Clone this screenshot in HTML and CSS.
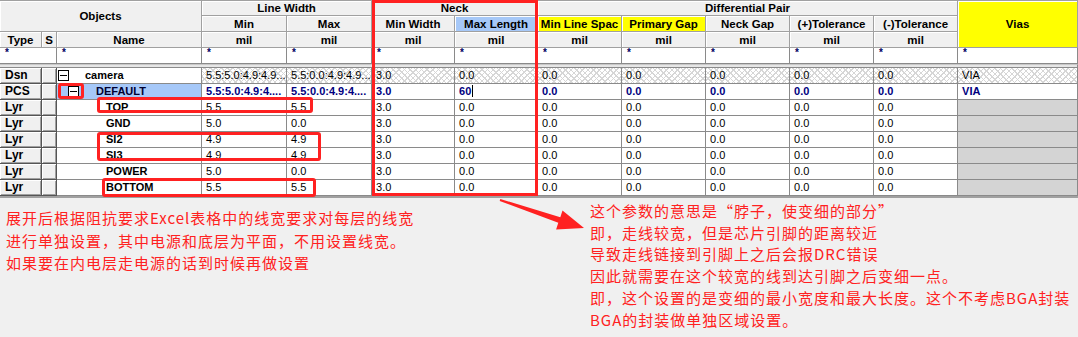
FILE: index.html
```html
<!DOCTYPE html>
<html lang="zh-CN">
<head>
    <meta charset="UTF-8">
    <title>Constraint Manager - Neck</title>
    <link rel="stylesheet" href="styles.css">
</head>
<body>

    <div class="sheet">
        <table class="grid">
            <colgroup>
                <col class="c-type"><col class="c-s"><col class="c-name">
                <col class="c-lw"><col class="c-lw">
                <col class="c-neck"><col class="c-neck">
                <col class="c-dp"><col class="c-dp"><col class="c-dp"><col class="c-dp"><col class="c-dp">
                <col class="c-vias">
            </colgroup>
            <thead>
                <tr class="h1">
                    <th colspan="3" rowspan="2">Objects</th>
                    <th colspan="2">Line Width</th>
                    <th colspan="2">Neck</th>
                    <th colspan="5">Differential Pair</th>
                    <th rowspan="3" class="hl">Vias</th>
                </tr>
                <tr class="h2">
                    <th>Min</th>
                    <th>Max</th>
                    <th>Min Width</th>
                    <th class="sel">Max Length</th>
                    <th class="hl">Min Line Spac</th>
                    <th class="hl">Primary Gap</th>
                    <th>Neck Gap</th>
                    <th>(+)Tolerance</th>
                    <th>(-)Tolerance</th>
                </tr>
                <tr class="h3">
                    <th>Type</th>
                    <th>S</th>
                    <th>Name</th>
                    <th>mil</th><th>mil</th><th>mil</th><th>mil</th><th>mil</th>
                    <th>mil</th><th>mil</th><th>mil</th><th>mil</th>
                </tr>
            </thead>
            <tbody>
                <tr class="filter">
                    <td colspan="2">*</td>
                    <td>*</td><td>*</td><td>*</td><td>*</td><td>*</td>
                    <td>*</td><td>*</td><td>*</td><td>*</td><td>*</td><td>*</td>
                </tr>
                <tr class="gap"><td colspan="13"></td></tr>

                <tr class="dsn">
                    <td class="btn">Dsn</td><td class="btn"></td>
                    <td class="name"><div class="tree lvl-0"><span class="toggle"></span><span class="label">camera</span></div></td>
                    <td class="num">5.5:5.0:4.9:4.9...</td>
                    <td class="num">5.5:0.0:4.9:4.9...</td>
                    <td class="num">3.0</td><td class="num">0.0</td>
                    <td class="num">0.0</td><td class="num">0.0</td><td class="num">0.0</td><td class="num">0.0</td><td class="num">0.0</td>
                    <td class="num">VIA</td>
                </tr>
                <tr class="pcs">
                    <td class="btn">PCS</td><td class="btn"></td>
                    <td class="name"><div class="tree lvl-1"><span class="toggle"></span><span class="label">DEFAULT</span></div></td>
                    <td class="num">5.5:5.0:4.9:4....</td>
                    <td class="num">5.5:0.0:4.9:4....</td>
                    <td class="num">3.0</td><td class="num"><span class="caret">60</span></td>
                    <td class="num">0.0</td><td class="num">0.0</td><td class="num">0.0</td><td class="num">0.0</td><td class="num">0.0</td>
                    <td class="num">VIA</td>
                </tr>
                <tr class="lyr">
                    <td class="btn">Lyr</td><td class="btn"></td>
                    <td class="name"><div class="tree lvl-2"><span class="label">TOP</span></div></td>
                    <td class="num">5.5</td><td class="num">5.5</td>
                    <td class="num">3.0</td><td class="num">0.0</td>
                    <td class="num">0.0</td><td class="num">0.0</td><td class="num">0.0</td><td class="num">0.0</td><td class="num">0.0</td>
                    <td class="off"></td>
                </tr>
                <tr class="lyr">
                    <td class="btn">Lyr</td><td class="btn"></td>
                    <td class="name"><div class="tree lvl-2"><span class="label">GND</span></div></td>
                    <td class="num">5.0</td><td class="num">0.0</td>
                    <td class="num">3.0</td><td class="num">0.0</td>
                    <td class="num">0.0</td><td class="num">0.0</td><td class="num">0.0</td><td class="num">0.0</td><td class="num">0.0</td>
                    <td class="off"></td>
                </tr>
                <tr class="lyr">
                    <td class="btn">Lyr</td><td class="btn"></td>
                    <td class="name"><div class="tree lvl-2"><span class="label">SI2</span></div></td>
                    <td class="num">4.9</td><td class="num">4.9</td>
                    <td class="num">3.0</td><td class="num">0.0</td>
                    <td class="num">0.0</td><td class="num">0.0</td><td class="num">0.0</td><td class="num">0.0</td><td class="num">0.0</td>
                    <td class="off"></td>
                </tr>
                <tr class="lyr">
                    <td class="btn">Lyr</td><td class="btn"></td>
                    <td class="name"><div class="tree lvl-2"><span class="label">SI3</span></div></td>
                    <td class="num">4.9</td><td class="num">4.9</td>
                    <td class="num">3.0</td><td class="num">0.0</td>
                    <td class="num">0.0</td><td class="num">0.0</td><td class="num">0.0</td><td class="num">0.0</td><td class="num">0.0</td>
                    <td class="off"></td>
                </tr>
                <tr class="lyr">
                    <td class="btn">Lyr</td><td class="btn"></td>
                    <td class="name"><div class="tree lvl-2"><span class="label">POWER</span></div></td>
                    <td class="num">5.0</td><td class="num">0.0</td>
                    <td class="num">3.0</td><td class="num">0.0</td>
                    <td class="num">0.0</td><td class="num">0.0</td><td class="num">0.0</td><td class="num">0.0</td><td class="num">0.0</td>
                    <td class="off"></td>
                </tr>
                <tr class="lyr">
                    <td class="btn">Lyr</td><td class="btn"></td>
                    <td class="name"><div class="tree lvl-2"><span class="label">BOTTOM</span></div></td>
                    <td class="num">5.5</td><td class="num">5.5</td>
                    <td class="num">3.0</td><td class="num">0.0</td>
                    <td class="num">0.0</td><td class="num">0.0</td><td class="num">0.0</td><td class="num">0.0</td><td class="num">0.0</td>
                    <td class="off"></td>
                </tr>
            </tbody>
        </table>

        <!-- red annotation boxes drawn over the grid -->
        <div class="mark mark-pcs"></div>
        <div class="mark mark-top"></div>
        <div class="mark mark-si"></div>
        <div class="mark mark-bottom"></div>
        <div class="mark mark-neck"></div>
    </div>

    <div class="notes">
        <div class="note note-left">
            <p>展开后根据阻抗要求Excel表格中的线宽要求对每层的线宽</p>
            <p>进行单独设置，其中电源和底层为平面，不用设置线宽。</p>
            <p>如果要在内电层走电源的话到时候再做设置</p>
        </div>
        <div class="note note-right">
            <p>这个参数的意思是“脖子，使变细的部分”</p>
            <p>即，走线较宽，但是芯片引脚的距离较近</p>
            <p>导致走线链接到引脚上之后会报DRC错误</p>
            <p>因此就需要在这个较宽的线到达引脚之后变细一点。</p>
            <p>即，这个设置的是变细的最小宽度和最大长度。这个不考虑BGA封装</p>
            <p>BGA的封装做单独区域设置。</p>
        </div>
    </div>

    <svg class="arrow" width="1078" height="337" viewBox="0 0 1078 337">
        <polygon points="500.3,199 560.3,217.2 562.5,210.5 584,228 556.1,229.5 558.3,222.8 499.7,201" fill="#ff2121"/>
    </svg>

</body>
</html>
```

FILE: styles.css
```css
body {
    margin: 0;
    padding: 0;
    width: 1078px;
    height: 337px;
    overflow: hidden;
    position: relative;
    background-color: #f0f0f0;
    font-family: "Liberation Sans", Arial, sans-serif;
}

.sheet {
    position: relative;
    width: 1078px;
    border-bottom: 2px solid #a0a0a0;
}

.grid {
    width: 1078px;
    table-layout: fixed;
    border-collapse: separate;
    border-spacing: 0;
    font-size: 11px;
    color: #000;
}

.c-type { width: 42px; }
.c-s { width: 15px; }
.c-name { width: 145px; }
.c-lw { width: 85px; }
.c-neck { width: 83px; }
.c-dp { width: 84px; }
.c-vias { width: 120px; }

.grid th,
.grid td {
    box-sizing: border-box;
    padding: 0;
    white-space: nowrap;
    overflow: hidden;
}

/* header */
.grid th {
    background-color: #f0f0f0;
    border-right: 1px solid #a0a0a0;
    border-bottom: 1px solid #a0a0a0;
    box-shadow: inset 1px 1px 0 #fff;
    font-weight: bold;
    font-size: 11.5px;
    text-align: center;
    line-height: 14px;
}

.grid tr.h1,
.grid tr.h2,
.grid tr.h3 {
    height: 16px;
}

.grid tr.h1 th {
    border-top: 1px solid #a0a0a0;
}

.grid th.hl {
    background-color: #ffff00;
}

.grid th.sel {
    background-color: #a6c8f8;
}

/* filter row */
.grid tr.filter {
    height: 15px;
}

.grid tr.filter td {
    background-color: #fff;
    border-right: 1px solid #8a8a8a;
    vertical-align: top;
    padding-left: 5px;
    font-size: 10px;
    font-weight: bold;
    line-height: 10px;
    color: #000060;
}

.grid tr.gap td {
    height: 4px;
    background-color: #e6e6e6;
    border-top: 1px solid #c8c8c8;
}

/* data rows */
.grid tbody tr.dsn,
.grid tbody tr.pcs,
.grid tbody tr.lyr {
    height: 16px;
}

.grid td {
    height: 16px;
    line-height: 15px;
    background-color: #fff;
    border-right: 1px solid #8a8a8a;
    border-bottom: 1px solid #8a8a8a;
}

.grid td.btn {
    background-color: #f0f0f0;
    border-right: 1px solid #555;
    border-bottom: 1px solid #555;
    box-shadow: inset 1px 1px 0 #fff, inset -1px -1px 0 #a0a0a0;
    font-weight: bold;
    font-size: 12px;
    padding-left: 5px;
}

.grid td.num {
    padding-left: 4px;
    padding-right: 2px;
}

.grid td.off {
    background-color: #d4d4d4;
}

.dsn td.num {
    background-color: #fff;
    background-image:
        repeating-linear-gradient(45deg, #d6d6d6 0 1px, transparent 1px 4px),
        repeating-linear-gradient(-45deg, #d6d6d6 0 1px, transparent 1px 4px);
}

.pcs td.num {
    font-weight: bold;
    color: #000080;
}

.pcs td.name {
    background-color: #a6c8f8;
}

.caret {
    border-right: 1px solid #000;
    padding-right: 1px;
}

/* tree column */
.tree {
    display: flex;
    align-items: center;
    height: 15px;
    font-weight: bold;
    font-size: 11px;
}

.tree.lvl-0 { padding-left: 1px; }
.tree.lvl-1 { padding-left: 11px; }
.tree.lvl-2 { padding-left: 49px; }

.tree.lvl-0 .label { margin-left: 16px; }
.tree.lvl-1 .label { margin-left: 17px; }

.toggle {
    position: relative;
    width: 11px;
    height: 11px;
    box-sizing: border-box;
    border: 1px solid #000;
    background-color: #fff;
}

.toggle::after {
    content: "";
    position: absolute;
    left: 1px;
    right: 1px;
    top: 4px;
    height: 1px;
    background-color: #000;
}

.pcs .label {
    color: #000030;
}

/* annotations */
.mark {
    position: absolute;
    box-sizing: border-box;
    border: 3px solid #ff2121;
    border-radius: 3px;
}

.mark-pcs { left: 58px; top: 83px; width: 26px; height: 16px; }
.mark-top { left: 97px; top: 97px; width: 216px; height: 16px; }
.mark-si { left: 97px; top: 132px; width: 224px; height: 29px; }
.mark-bottom { left: 102px; top: 178px; width: 214px; height: 19px; }
.mark-neck { left: 372px; top: 0; width: 166px; height: 196px; border-radius: 0; }

.notes {
    display: flex;
    align-items: flex-start;
    font-family: "Noto Sans CJK SC", "Noto Sans", sans-serif;
    font-size: 15px;
    letter-spacing: 1px;
    color: #ff2121;
}

.note p {
    margin: 0;
    white-space: nowrap;
}

.note-left {
    width: 584px;
    padding: 9px 0 0 6px;
    line-height: 22.5px;
}

.note-right {
    padding-top: 2px;
    line-height: 21.7px;
}

.arrow {
    position: absolute;
    left: 0;
    top: 0;
    pointer-events: none;
}
```
